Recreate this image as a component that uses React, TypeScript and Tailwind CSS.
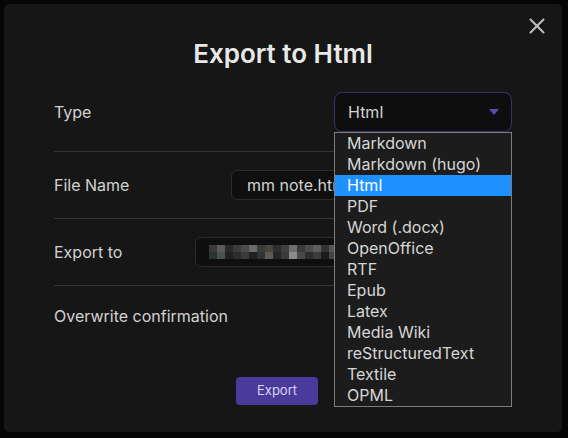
import { X } from 'lucide-react'

const options = [
  'Markdown',
  'Markdown (hugo)',
  'Html',
  'PDF',
  'Word (.docx)',
  'OpenOffice',
  'RTF',
  'Epub',
  'Latex',
  'Media Wiki',
  'reStructuredText',
  'Textile',
  'OPML',
]

// blurred path, drawn as a mosaic
const mosaic = [
  ['#3a3a3a', '#5a5a5a', '#2a2a2a', '#3c3c3c', '#4a4a4a', '#6a6a6a', '#3a3a3a', '#4b443c', '#2e2e2e', '#3e3e3e', '#6e6e6e', '#3a3a3a', '#4c4c4c', '#5e5e5e', '#333333', '#555555'],
  ['#2a3436', '#4e4e4e', '#222222', '#2c2c2c', '#3a3a3a', '#1e2226', '#333333', '#5a5a5a', '#262626', '#3a3a3a', '#8a8a8a', '#4a4a4a', '#2e2e2e', '#3c3c3c', '#1c1c1c', '#444444'],
]

export default function App() {
  return (
    <main className="w-[568px] h-[438px] bg-[#050505] p-[4px] pr-[6px] font-['Inter','Noto_Sans',sans-serif]">
      <div className="relative h-[428px] rounded-[5px] bg-[#161616] px-[50px]">
        <button className="absolute right-[12px] top-[9px] flex text-[#bdbdbd]">
          <X size={26} strokeWidth={1.9} />
        </button>

        <h1 className="h-[69px] pt-[34px] text-center text-[26px] leading-[32px] font-semibold text-[#e8e8e8]">
          Export to Html
        </h1>

        <div className="flex h-[79px] items-center justify-between border-b border-[#333333] text-[16px] text-[#d2d2d2]">
          <span>Type</span>
          <div className="relative w-[178px]">
            <div className="flex h-[40px] items-center justify-between rounded-[8px] border border-[#3b326c] bg-[#0e0e0e] pl-[13px] pr-[12px]">
              <span>Html</span>
              <svg width="10" height="6" viewBox="0 0 10 6">
                <path d="M0 0h10L5 6z" fill="#5a4ab5" />
              </svg>
            </div>
            <ul className="absolute left-0 top-[40px] z-10 w-[178px] border border-[#7d7d7d] bg-[#1c1c1c]">
              {options.map((o) => (
                <li
                  key={o}
                  className={
                    o === 'Html'
                      ? 'h-[21px] bg-[#1e90ff] pl-[12px] leading-[21px] text-white'
                      : 'h-[21px] pl-[12px] leading-[21px] text-[#d6d6d6]'
                  }
                >
                  {o}
                </li>
              ))}
            </ul>
          </div>
        </div>

        <div className="flex h-[67px] items-center justify-between border-b border-[#333333] text-[16px] text-[#d2d2d2]">
          <span>File Name</span>
          <div className="flex h-[30px] w-[281px] items-center rounded-[6px] border border-[#2c2c2c] bg-[#0f0f0f] px-[15px]">
            mm note.html
          </div>
        </div>

        <div className="flex h-[67px] items-center justify-between border-b border-[#333333] text-[16px] text-[#d2d2d2]">
          <span>Export to</span>
          <div className="flex h-[30px] w-[317px] items-center rounded-[6px] border border-[#2c2c2c] bg-[#0f0f0f] px-[13px]">
            <div className="flex flex-col">
              {mosaic.map((row, i) => (
                <div key={i} className="flex">
                  {row.map((c, j) => (
                    <div key={j} className="h-[7px] w-[8px]" style={{ background: c }} />
                  ))}
                </div>
              ))}
            </div>
          </div>
        </div>

        <div className="flex h-[60px] items-center text-[16px] text-[#d2d2d2]">
          <span>Overwrite confirmation</span>
        </div>

        <div className="pt-[31px] pl-[182px]">
          <button className="h-[28px] w-[82px] rounded-[4px] bg-[#4a3a9c] text-[13px] text-[#dcd4f4]">
            Export
          </button>
        </div>
      </div>
    </main>
  )
}
